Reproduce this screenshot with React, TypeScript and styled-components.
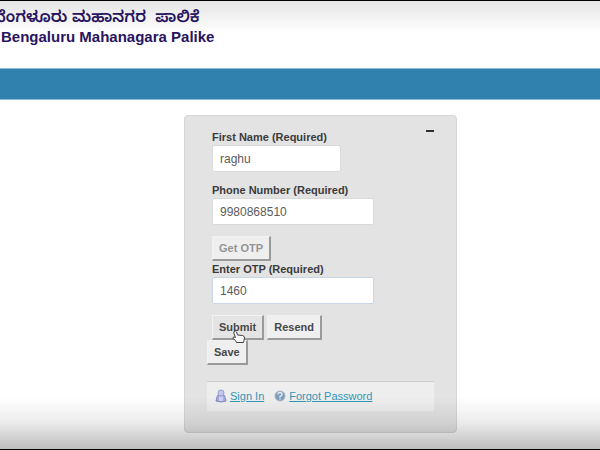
import React from "react";
import styled, { createGlobalStyle } from "styled-components";

const GlobalStyle = createGlobalStyle`
  * { box-sizing: border-box; }
  body {
    margin: 0;
    background: #fff;
    color: #3b3b3b;
    font-family: "Liberation Sans", Arial, sans-serif;
    font-size: 11px;
  }
`;

const Page = styled.div`
  position: relative;
  display: flex;
  flex-direction: column;
  min-height: 100vh;
  border-top: 1px solid #000;
  border-bottom: 1px solid #000;
  overflow: hidden;
`;

const BottomShade = styled.div`
  position: absolute;
  inset: auto 0 0;
  height: 52px;
  pointer-events: none;
  background: linear-gradient(rgba(0, 0, 0, 0), rgba(0, 0, 0, 0.08) 50%, rgba(0, 0, 0, 0.26));
`;

const Header = styled.header`
  height: 67px;
  padding-top: 10px;
  background: linear-gradient(#e4e4e4, #fff 32px);
  color: #28145f;
  font-weight: bold;
  white-space: pre;
`;

const NativeName = styled.div`
  margin-left: -8px;
  font-family: "Noto Sans Kannada", "Noto Sans", sans-serif;
  font-size: 16px;
  font-weight: 600;
  line-height: 18px;
`;

const EnglishName = styled.div`
  padding-left: 1px;
  font-size: 15px;
  line-height: 16px;
`;

const NavBar = styled.nav`
  height: 32px;
  background: #3181ae;
  border-top: 1px solid #8fb9d1;
  border-bottom: 1px solid #8fb9d1;
`;

const Main = styled.main`
  display: flex;
  padding: 15px 16px 16px 184px;
`;

const Card = styled.section`
  flex: 0 1 273px;
  padding: 13px 22px 21px;
  background: #e3e3e3;
  border: 1px solid #d6d6d6;
  border-radius: 4px;
`;

const CardTop = styled.div`
  display: flex;
  align-items: flex-start;
  justify-content: space-between;
`;

const Form = styled.form`
  padding-left: 5px;
`;

const Field = styled.div<{ $gap: number }>`
  display: flex;
  flex-direction: column;
  margin-bottom: ${(p) => p.$gap}px;
`;

const Label = styled.label`
  font-weight: bold;
  line-height: 16px;
`;

const TextInput = styled.input<{ $width: number; $active?: boolean }>`
  width: ${(p) => p.$width}px;
  max-width: 100%;
  height: 27px;
  padding: 0 7px;
  border: 1px solid ${(p) => (p.$active ? "#c9d6e3" : "#dadada")};
  border-radius: 2px;
  background: #fff;
  color: #5c5c5c;
  font: 12px "Liberation Sans", Arial, sans-serif;
  outline: none;
`;

const ButtonRow = styled.div<{ $outdent?: boolean }>`
  display: flex;
  gap: 3px;
  margin-left: ${(p) => (p.$outdent ? -5 : 0)}px;
`;

const Button = styled.button<{ $pressed?: boolean }>`
  height: 25px;
  padding: 0 6px 1px;
  border: solid;
  border-width: 1px 2px 2px 1px;
  border-color: #f2f2f2 #9a9a9a #9a9a9a #f2f2f2;
  background: ${(p) => (p.$pressed ? "#e4e4e4" : "#efefef")};
  color: #484848;
  font: bold 11px "Liberation Sans", Arial, sans-serif;
  &:disabled { color: #959595; }
`;

const CursorAnchor = styled.span`
  position: relative;
  display: flex;
`;

const Cursor = styled.svg`
  position: absolute;
  left: 20px;
  top: 15px;
  z-index: 1;
  pointer-events: none;
`;

const Collapse = styled.button`
  display: flex;
  align-items: center;
  justify-content: center;
  width: 8px;
  height: 4px;
  padding: 0;
  border: 0;
  background: none;
  &::before {
    content: "";
    width: 8px;
    height: 2px;
    background: #303030;
  }
`;

const Links = styled.div`
  display: flex;
  gap: 10px;
  margin-top: 16px;
  padding: 6px 8px 7px;
  border-top: 1px solid #cdcdcd;
  background: #eeeeee;
`;

const LinkItem = styled.span`
  display: flex;
  align-items: center;
  gap: 3px;
  line-height: 16px;
`;

const Link = styled.a`
  color: #3197b7;
`;

function UserIcon() {
  return (
    <svg width="12" height="14" viewBox="0 0 12 14" aria-hidden="true">
      <path d="M2 8Q2 6 4 6H8Q10 6 10 8L11 12Q6 14 1 12Z" fill="#a3aae6" stroke="#8588bd" />
      <circle cx="6" cy="4" r="3" fill="#c4c8ef" stroke="#979bcb" />
      <path d="M4 7Q6 9 8 7V12H4Z" fill="#cdd2f6" />
    </svg>
  );
}

function HelpIcon() {
  return (
    <svg width="12" height="12" viewBox="0 0 12 12" aria-hidden="true">
      <circle cx="6" cy="6" r="5" fill="#7f9dbc" stroke="#aab4bf" />
      <path d="M4 4.5Q4 2.5 6 2.5T8 4.5Q8 5.5 6 6.5V7.5" fill="none" stroke="#e6edf5" strokeWidth="1.4" />
      <circle cx="6" cy="9" r=".8" fill="#e6edf5" />
    </svg>
  );
}

function HandCursor() {
  return (
    <Cursor width="14" height="14" viewBox="0 0 14 14" aria-hidden="true">
      <path
        d="M2 1.5Q3.5.3 4.5 2L5.5 5 10.5 5.5Q12.5 5.8 12.5 8L11.5 12.5H4.5L3.5 10.5 1 8.5Q.5 7 2 7L3.5 7.5 1.8 3Z"
        fill="#f7f7f7"
        stroke="#444"
        strokeLinejoin="round"
      />
    </Cursor>
  );
}

export default function App() {
  return (
    <>
      <GlobalStyle />
      <Page>
        <Header>
          <NativeName lang="kn">{"ಬೆಂಗಳೂರು ಮಹಾನಗರ  ಪಾಲಿಕೆ"}</NativeName>
          <EnglishName>Bengaluru Mahanagara Palike</EnglishName>
        </Header>
        <NavBar aria-label="Main" />
        <Main>
          <Card>
            <CardTop>
              <Form onSubmit={(e) => e.preventDefault()}>
                <Field $gap={10}>
                  <Label htmlFor="first-name">First Name (Required)</Label>
                  <TextInput id="first-name" $width={129} defaultValue="raghu" />
                </Field>
                <Field $gap={11}>
                  <Label htmlFor="phone">Phone Number (Required)</Label>
                  <TextInput id="phone" $width={162} defaultValue="9980868510" />
                </Field>
                <ButtonRow>
                  <Button type="button" disabled>Get OTP</Button>
                </ButtonRow>
                <Field $gap={11}>
                  <Label htmlFor="otp">Enter OTP (Required)</Label>
                  <TextInput id="otp" $width={162} $active defaultValue="1460" />
                </Field>
                <ButtonRow>
                  <CursorAnchor>
                    <Button type="submit" $pressed>Submit</Button>
                    <HandCursor />
                  </CursorAnchor>
                  <Button type="button">Resend</Button>
                </ButtonRow>
                <ButtonRow $outdent>
                  <Button type="button">Save</Button>
                </ButtonRow>
              </Form>
              <Collapse type="button" aria-label="Collapse" />
            </CardTop>
            <Links>
              <LinkItem>
                <UserIcon />
                <Link href="#sign-in">Sign In</Link>
              </LinkItem>
              <LinkItem>
                <HelpIcon />
                <Link href="#forgot-password">Forgot Password</Link>
              </LinkItem>
            </Links>
          </Card>
        </Main>
        <BottomShade />
      </Page>
    </>
  );
}
